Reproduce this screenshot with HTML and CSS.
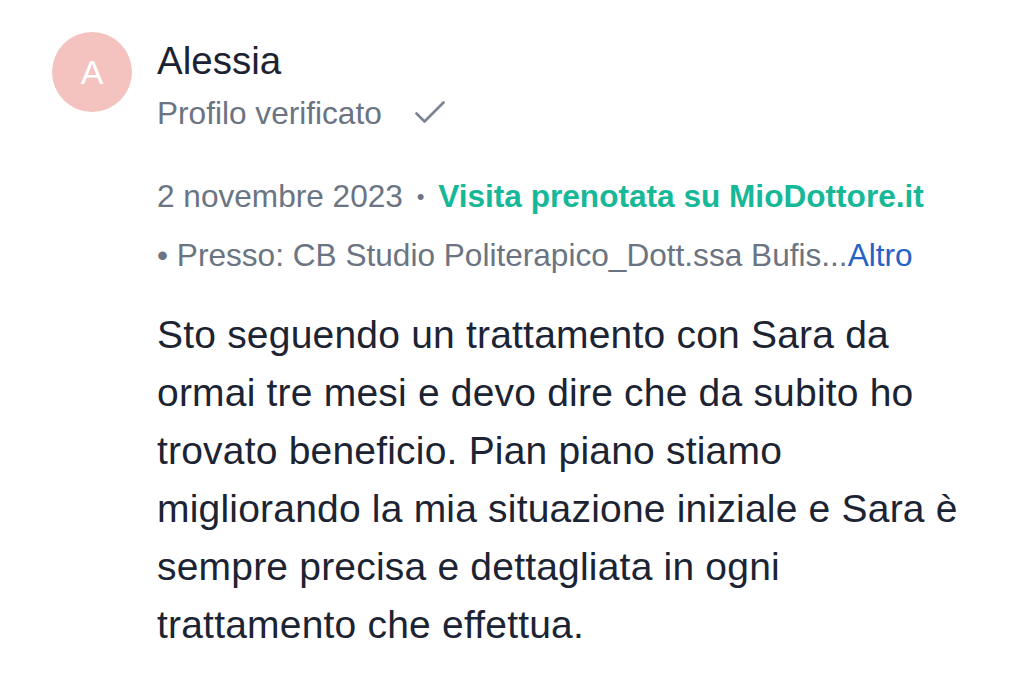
FILE: index.html
```html
<!DOCTYPE html>
<html lang="it">
<head>
<meta charset="utf-8">
<title>Recensione</title>
<link rel="stylesheet" href="styles.css">
</head>
<body>
<article class="review">
  <div class="avatar">A</div>
  <div class="content">
    <div class="name">Alessia</div>
    <div class="verified">
      <span>Profilo verificato</span>
      <svg class="check" width="30" height="24" viewBox="0 0 30 24" aria-hidden="true">
        <path d="M1.5 13.5 L9.5 21.5 L28.5 2.5" fill="none" stroke="#7b8592" stroke-width="2.6" stroke-linecap="round" stroke-linejoin="round"/>
      </svg>
    </div>
    <div class="meta">2 novembre 2023 <span class="dot">•</span> <span class="booked">Visita prenotata su MioDottore.it</span></div>
    <div class="place">• Presso: CB Studio Politerapico_Dott.ssa Bufis...<a class="more" href="#">Altro</a></div>
    <p class="text">Sto seguendo un trattamento con Sara da ormai tre mesi e devo dire che da subito ho trovato beneficio. Pian piano stiamo migliorando la mia situazione iniziale e Sara è sempre precisa e dettagliata in ogni trattamento che effettua.</p>
  </div>
</article>
</body>
</html>
```
FILE: styles.css
```css
html, body {
  margin: 0;
  padding: 0;
  background: #ffffff;
}
body {
  font-family: "Liberation Sans", Arial, Helvetica, sans-serif;
  color: #1c2434;
}
.review {
  display: flex;
  align-items: flex-start;
  gap: 25px;
  padding: 32px 0 0 52px;
}
.avatar {
  flex: none;
  width: 80px;
  height: 80px;
  border-radius: 50%;
  background: #f4c3bf;
  color: #ffffff;
  font-size: 34px;
  line-height: 80px;
  text-align: center;
}
.content {
  padding-top: 6px;
}
.name {
  font-size: 38.5px;
  line-height: 46px;
  color: #1b2333;
}
.verified {
  display: flex;
  align-items: center;
  margin-top: 9px;
  font-size: 31.6px;
  line-height: 40px;
  color: #6b7482;
}
.check {
  margin-left: 33px;
  margin-top: -2px;
}
.meta {
  margin-top: 43px;
  font-size: 31.6px;
  line-height: 40px;
  color: #6b7482;
}
.dot {
  font-size: 22px;
  margin: 0 5px;
  vertical-align: 3px;
}
.booked {
  color: #17b897;
  font-weight: bold;
}
.place {
  margin-top: 18px;
  font-size: 31.6px;
  line-height: 40px;
  color: #6b7482;
}
.more {
  color: #2562c8;
  text-decoration: none;
}
.text {
  margin: 31px 0 0;
  width: 820px;
  font-size: 39px;
  line-height: 58px;
  letter-spacing: 0.2px;
  color: #1c2434;
}
```
